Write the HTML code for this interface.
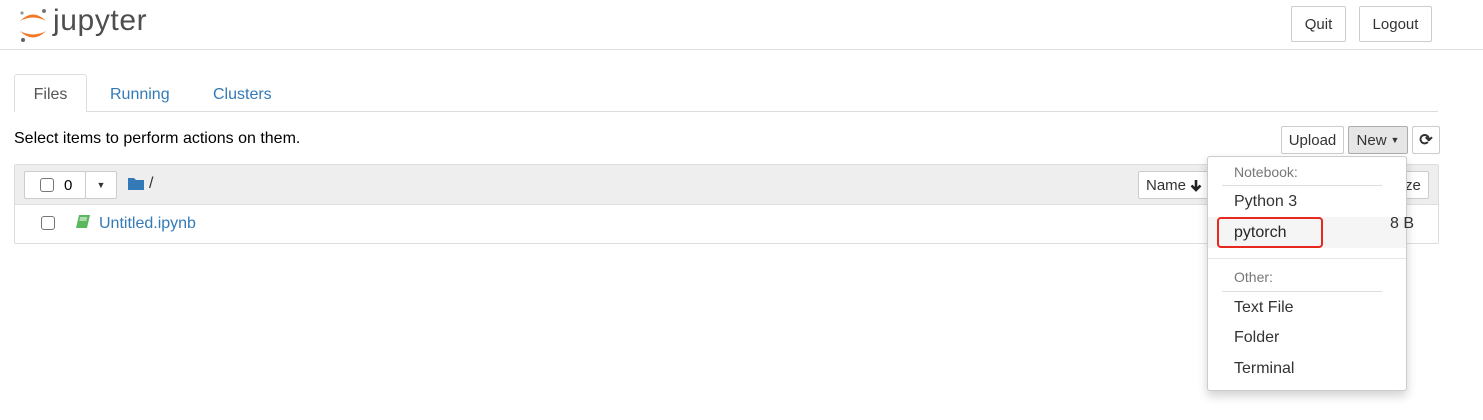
<!DOCTYPE html>
<html><head><style>
body{margin:0;width:1483px;height:420px;background:#fff;font-family:"Liberation Sans",Arial,sans-serif;font-size:16px;color:#000;position:relative;overflow:hidden}
.a{position:absolute}
.btn{position:absolute;border:1px solid #ccc;border-radius:2px;background:#fff;box-sizing:border-box;display:flex;align-items:center;justify-content:center;color:#333}
a{color:#337ab7;text-decoration:none}
.cb{position:absolute;width:13px;height:13px;border:1px solid #767676;border-radius:3px;box-sizing:border-box;background:#fff}
</style></head><body>
<!-- header -->
<svg class="a" style="left:18px;top:6px" width="32" height="38" viewBox="0 0 32 38">
<path d="M2 15 Q15 2 28 15 Q15 8 2 15Z" fill="#f37726"/>
<path d="M2 25 Q15 38 28 25 Q15 32 2 25Z" fill="#f37726"/>
<circle cx="26" cy="5" r="2" fill="#767677"/><circle cx="4" cy="7" r="1.6" fill="#989798"/><circle cx="5" cy="34" r="2" fill="#616262"/>
</svg>
<div class="a" style="left:53px;top:4px;font-size:30px;color:#4e4e4e;letter-spacing:0.6px">jupyter</div>
<div class="btn" style="left:1291px;top:6px;width:55px;height:36px;font-size:15px">Quit</div>
<div class="btn" style="left:1359px;top:6px;width:73px;height:36px;font-size:15px">Logout</div>
<div class="a" style="left:0;top:49px;width:1483px;height:1px;background:#e0e0e0"></div>
<!-- tabs -->
<div class="a" style="left:14px;top:111px;width:1424px;height:1px;background:#ddd"></div>
<div class="a" style="left:14px;top:74px;width:73px;height:38px;border:1px solid #ddd;border-bottom:none;border-radius:3px 3px 0 0;background:#fff;box-sizing:border-box;text-align:center;line-height:40px;color:#555">Files</div>
<a class="a" style="left:110px;top:86px">Running</a>
<a class="a" style="left:213px;top:86px">Clusters</a>
<div class="a" style="left:14px;top:130px;font-size:16px;color:#000">Select items to perform actions on them.</div>
<div class="btn" style="left:1281px;top:126px;width:63px;height:28px;font-size:15px">Upload</div>
<div class="btn" style="left:1348px;top:126px;width:60px;height:28px;font-size:15px;background:#e6e6e6;border-color:#adadad">New <span style="font-size:9px;margin-left:4px">▼</span></div>
<div class="btn" style="left:1412px;top:126px;width:28px;height:28px;font-size:16px;font-weight:bold">⟳</div>
<!-- list -->
<div class="a" style="left:14px;top:164px;width:1425px;height:80px;border:1px solid #ddd;border-radius:2px;box-sizing:border-box"></div>
<div class="a" style="left:15px;top:165px;width:1423px;height:39px;background:#eee;border-bottom:1px solid #ddd"></div>
<div class="btn" style="left:24px;top:171px;width:62px;height:28px"></div>
<div class="btn" style="left:85px;top:171px;width:32px;height:28px;font-size:9px">▼</div>
<div class="cb" style="left:40px;top:178px;width:14px;height:14px"></div>
<div class="a" style="left:64px;top:177px;font-size:15px">0</div>
<svg class="a" style="left:128px;top:177px" width="16" height="13"><path d="M0 1h6l2 2h8v10H0z" fill="#337ab7"/></svg>
<div class="a" style="left:149px;top:175px;color:#333">/</div>
<div class="btn" style="left:1138px;top:171px;width:72px;height:28px;font-size:15px;justify-content:flex-start;padding-left:7px">Name <svg style="margin-left:4px" width="12" height="13"><path d="M6 1v10M1.5 6.5L6 11l4.5-4.5" stroke="#222" stroke-width="2.6" fill="none"/></svg></div>
<div class="btn" style="left:1398px;top:171px;width:31px;height:28px;font-size:15px;justify-content:flex-start;padding-left:6px">ze</div>
<div class="cb" style="left:41px;top:216px;width:14px;height:14px"></div>
<svg class="a" style="left:75px;top:214px" width="16" height="16"><path d="M4 1h11l-3 13H1z" fill="#5cb85c"/><path d="M5 4h7M4.5 6h7" stroke="#fff" stroke-width="1"/></svg>
<a class="a" style="left:99px;top:215px">Untitled.ipynb</a>
<!-- dropdown -->
<div class="a" style="left:1207px;top:156px;width:200px;height:235px;background:#fff;border:1px solid #ccc;border-radius:3px;box-shadow:0 5px 10px rgba(0,0,0,.18);box-sizing:border-box"></div>
<div class="a" style="left:1234px;top:164px;font-size:14px;color:#777">Notebook:</div>
<div class="a" style="left:1222px;top:185px;width:160px;height:1px;background:#ddd"></div>
<div class="a" style="left:1234px;top:193px;color:#333">Python 3</div>
<div class="a" style="left:1208px;top:217px;width:198px;height:31px;background:#f5f5f5"></div>
<div class="a" style="left:1217px;top:217px;width:102px;height:27px;border:2.5px solid #e8281e;border-radius:4px"></div>
<div class="a" style="left:1234px;top:224px;color:#262626">pytorch</div>
<div class="a" style="left:1390px;top:215px;color:#333">8 B</div>
<div class="a" style="left:1208px;top:258px;width:198px;height:1px;background:#e5e5e5"></div>
<div class="a" style="left:1234px;top:269px;font-size:14px;color:#777">Other:</div>
<div class="a" style="left:1222px;top:291px;width:160px;height:1px;background:#ddd"></div>
<div class="a" style="left:1234px;top:299px;color:#333">Text File</div>
<div class="a" style="left:1234px;top:329px;color:#333">Folder</div>
<div class="a" style="left:1234px;top:360px;color:#333">Terminal</div>
</body></html>
